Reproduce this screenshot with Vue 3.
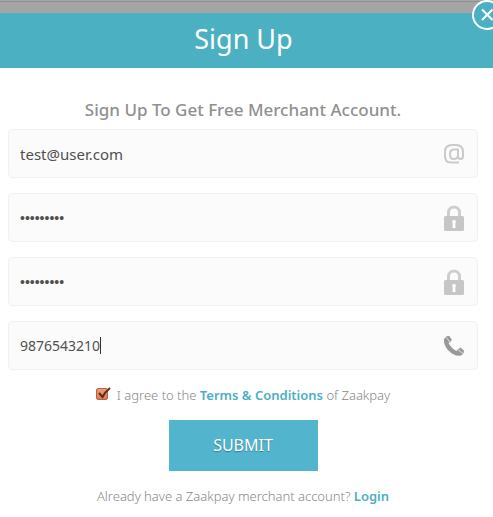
<script setup>
import { ref } from 'vue'

const fields = ref([
  { id: 'email', label: 'Email', type: 'email', icon: 'at', value: 'test@user.com' },
  { id: 'password', label: 'Password', type: 'password', icon: 'lock', value: 'secret123' },
  { id: 'confirm', label: 'Confirm password', type: 'password', icon: 'lock', value: 'secret123' },
  { id: 'phone', label: 'Phone', type: 'tel', icon: 'phone', value: '9876543210' },
])
const agreed = ref(true)
</script>

<template>
  <main class="modal">
    <header class="header">
      <h1>Sign Up</h1>
      <button class="close" type="button" aria-label="Close">
        <svg viewBox="0 0 30 30" width="30" height="30">
          <circle cx="15" cy="15" r="14" fill="#4bb0c1" stroke="#fff" stroke-width="2" />
          <path d="M10 9.500 20.500 20M20.500 9.500 10 20" stroke="#fff" stroke-width="2" fill="none" />
        </svg>
      </button>
    </header>

    <form class="form" @submit.prevent>
      <h2>Sign Up To Get Free Merchant Account.</h2>
      <div class="fields">
        <div v-for="field in fields" :key="field.id" class="field">
          <input
            :id="field.id"
            v-model="field.value"
            :type="field.type"
            :aria-label="field.label"
            autocomplete="off"
          />
          <span v-if="field.id === 'phone'" class="caret"></span>
          <label :for="field.id" class="icon">
            <svg v-if="field.icon === 'at'" viewBox="0 0 20 20" width="20" height="20" fill="none" stroke="#cacaca" stroke-width="2">
              <path d="M15 18.500H7Q1 18.500 1 12V8Q1 1 8 1H12Q19 1 19 8V12Q19 15 16.500 15Q14 15 14 12V5.500H10Q6 5.500 6 10Q6 15 9.500 15Q14 15 14 11" />
            </svg>
            <svg v-else-if="field.icon === 'lock'" viewBox="0 0 20 26" width="20" height="26">
              <path d="M4.500 11V7.500C4.500 0 15.500 0 15.500 7.500V11" fill="none" stroke="#cecece" stroke-width="3" />
              <rect y="11" width="20" height="15" rx="1.500" fill="#c6c6c6" />
              <path d="M10 15a2 2 0 0 1 1.200 3.600L11.500 23h-3l.3-4.400A2 2 0 0 1 10 15Z" fill="#fff" />
            </svg>
            <svg v-else viewBox="0 0 20 20" width="20" height="20" fill="#999">
              <path d="M0 3 3 0 5 .5 7 4 6.500 6 4.500 7Q7 12 12.500 15L14 13 16 12.800 20 16Q19.500 18 17 19.500C13 20.500 8 18.500 4 14C1 10.500-.5 6.500 0 3Z" />
              <path d="m3.500 0 1.500-.5 3 4.500-1.500 1ZM15 12.500 16.500 11.500 20 14.500V16Z" />
              <path d="m2.500 1.500 3.500 5M13.500 13.500l5.500 4" stroke="#dedede" stroke-width="1" fill="none" />
            </svg>
          </label>
        </div>
      </div>

      <div class="terms">
        <span class="box">
          <input id="agree" v-model="agreed" type="checkbox" />
          <svg v-if="agreed" class="tick" viewBox="0 0 15 13" width="15" height="13">
            <path d="m3 6 3.500 4Q9 5 14 1" fill="none" stroke="#5b2b1c" stroke-width="2" />
          </svg>
        </span>
        <p><label for="agree">I agree to the</label> <a href="#terms">Terms &amp; Conditions</a> of Zaakpay</p>
      </div>

      <button class="submit" type="submit">SUBMIT</button>
      <p class="login">Already have a Zaakpay merchant account? <a href="#login">Login</a></p>
    </form>
  </main>
</template>

<style>
body {
  background: #fff;
}
</style>

<style scoped>
.modal {
  position: relative;
  overflow-x: clip;
  border-top: 13px solid #a5a5a5;
  font-family: "Noto Sans", "Open Sans", sans-serif;
  color: #888;
}
.modal::before {
  content: "";
  position: absolute;
  top: -12px;
  left: 0;
  right: 0;
  height: 1px;
  background: #8d9293;
}
.header {
  position: relative;
  box-sizing: border-box;
  height: 55px;
  display: flex;
  align-items: center;
  justify-content: center;
  padding: 0 6px 4px 0;
  background: #4bb0c1;
}
h1 {
  margin: 0;
  color: #fff;
  font-size: 27px;
  line-height: 36px;
  font-weight: 400;
}
.close {
  position: absolute;
  top: -13px;
  right: -9px;
  width: 30px;
  height: 30px;
  padding: 0;
  border: 0;
  background: none;
}
.close svg {
  display: block;
}
.form {
  display: flex;
  flex-direction: column;
  align-items: center;
  padding: 30px 15px 0 8px;
}
h2 {
  margin: 0 0 7px;
  font-size: 17px;
  line-height: 24px;
  font-weight: 500;
  color: #909090;
}
.fields {
  align-self: stretch;
  display: grid;
  gap: 15px;
}
.field {
  position: relative;
  display: flex;
  align-items: center;
  box-sizing: border-box;
  height: 49px;
  border: 1px solid #f1f1f1;
  border-radius: 4px;
  background: #fbfbfb;
  font-size: 14px;
}
.field input {
  flex: 1;
  min-width: 0;
  height: 46px;
  padding: 0 11px;
  border: 0;
  outline: 0;
  background: transparent;
  color: #505050;
  font: inherit;
}
.field input[type="email"] {
  font-size: 15px;
}
.field input[type="password"] {
  font-family: "Liberation Sans", Arial, sans-serif;
}
.caret {
  position: absolute;
  left: calc(11px + 10ch);
  width: 1px;
  height: 17px;
  background: #333;
}
.icon {
  display: flex;
  margin-right: 13px;
}
.terms {
  display: flex;
  align-items: center;
  gap: 6px;
  margin-top: 15px;
}
.terms,
.login {
  font-size: 13px;
  line-height: 20px;
  font-weight: 300;
}
.terms p,
.login {
  margin: 0;
}
.box {
  position: relative;
  display: flex;
  width: 15px;
  height: 17px;
}
.box input {
  appearance: none;
  box-sizing: border-box;
  width: 12px;
  height: 12px;
  margin: 1px 0 0;
  border: 1px solid #a96650;
  border-radius: 2px;
  background: linear-gradient(#f49b75, #e8784e);
}
.tick {
  position: absolute;
  top: 0;
  left: 0;
  pointer-events: none;
}
a {
  color: #4bb0c1;
  font-weight: 600;
  text-decoration: none;
}
.submit {
  width: 149px;
  height: 51px;
  margin: 15px 0;
  padding: 0 0 2px;
  border: 0;
  background: #52b4cd;
  color: #fff;
  font-family: inherit;
  font-size: 16px;
  text-shadow: 0 1px 1px #397e90;
}
</style>
